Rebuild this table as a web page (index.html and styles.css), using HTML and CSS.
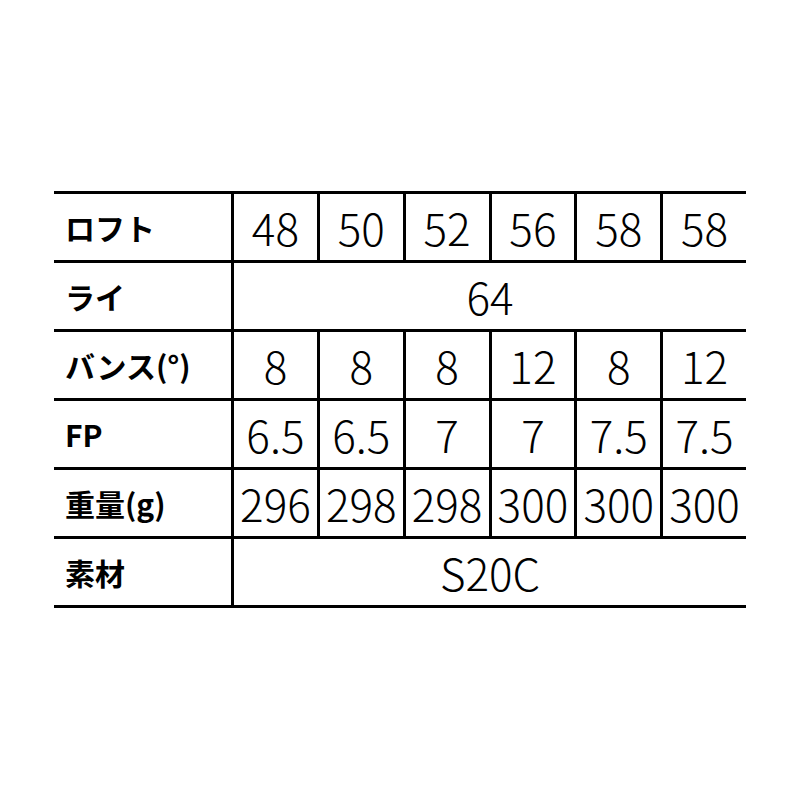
FILE: index.html
```html
<!DOCTYPE html>
<html lang="ja">
<head>
<meta charset="utf-8">
<link rel="stylesheet" href="styles.css">
</head>
<body>
<div class="spec">
  <div class="row">
    <div class="label">ロフト</div>
    <div class="cell">48</div><div class="cell">50</div><div class="cell">52</div><div class="cell">56</div><div class="cell">58</div><div class="cell">58</div>
  </div>
  <div class="row">
    <div class="label">ライ</div>
    <div class="cell span">64</div>
  </div>
  <div class="row">
    <div class="label">バンス(°)</div>
    <div class="cell">8</div><div class="cell">8</div><div class="cell">8</div><div class="cell">12</div><div class="cell">8</div><div class="cell">12</div>
  </div>
  <div class="row">
    <div class="label">FP</div>
    <div class="cell">6.5</div><div class="cell">6.5</div><div class="cell">7</div><div class="cell">7</div><div class="cell">7.5</div><div class="cell">7.5</div>
  </div>
  <div class="row">
    <div class="label">重量(g)</div>
    <div class="cell">296</div><div class="cell">298</div><div class="cell">298</div><div class="cell">300</div><div class="cell">300</div><div class="cell">300</div>
  </div>
  <div class="row">
    <div class="label">素材</div>
    <div class="cell span">S20C</div>
  </div>
</div>
</body>
</html>
```

FILE: styles.css
```css
html, body {
  margin: 0;
  padding: 0;
  background: #fff;
}
body {
  width: 800px;
  height: 800px;
  padding-top: 191px;
  padding-left: 54px;
  box-sizing: border-box;
  font-family: "Noto Sans CJK JP", "Noto Sans", sans-serif;
  color: #000;
}
.spec {
  width: 692px;
  border-top: 3px solid #000;
}
.row {
  display: grid;
  grid-template-columns: 177px repeat(6, 1fr);
  height: 66px;
  border-bottom: 3px solid #000;
}
.label {
  display: flex;
  align-items: center;
  padding-left: 11px;
  font-size: 30px;
  font-weight: 700;
  line-height: 1;
}
.cell {
  display: flex;
  align-items: center;
  justify-content: center;
  border-left: 3px solid #000;
  font-size: 44px;
  font-weight: 300;
  line-height: 1;
  box-sizing: border-box;
}
.cell.span {
  grid-column: 2 / span 6;
}
```
